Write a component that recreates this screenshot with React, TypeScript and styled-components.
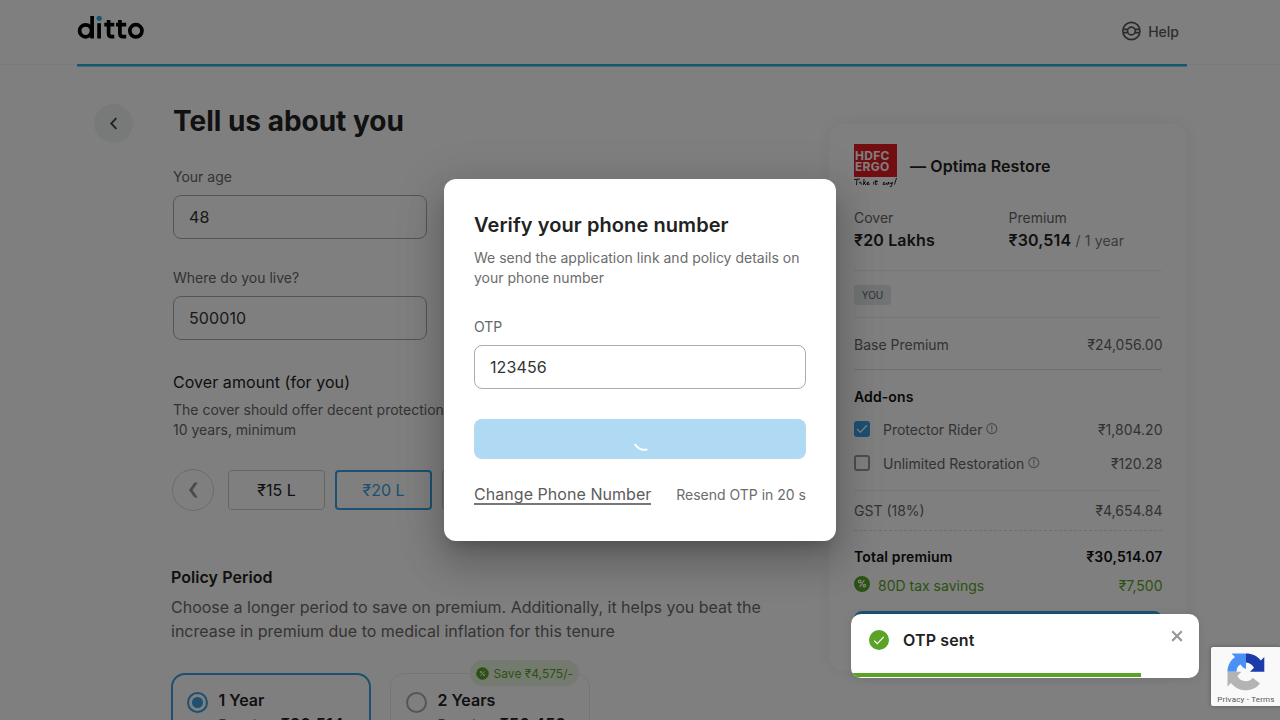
import React from "react";
import styled, { createGlobalStyle } from "styled-components";

const GlobalStyle = createGlobalStyle`
  * { box-sizing: border-box; }
  body { margin: 0; background: #fff; font-family: Inter, "Liberation Sans", sans-serif; color: #222; }
  input, button { font-family: inherit; }
  svg { display: block; flex: none; }
`;

const Page = styled.div`
  position: relative;
  width: 1280px;
  height: 720px;
  overflow: hidden;
`;

const Header = styled.header`
  height: 65px;
  padding: 0 93px 0 77px;
  border-bottom: 1px solid #f2f2f2;
`;
const HeaderInner = styled.div`
  width: 1110px;
  height: 66px;
  display: flex;
  align-items: flex-start;
  justify-content: space-between;
  border-bottom: 2px solid #22b0e0;
  box-shadow: 0 1px 0 #90d4ec;
`;
const LogoSvg = styled.svg`margin: 14px 0 0 0;`;
const HelpLink = styled.div`
  display: flex;
  align-items: center;
  gap: 7px;
  margin: 21px 8px 0 0;
  font-size: 14px;
  font-weight: 500;
  line-height: 22px;
  color: #5c5c5c;
`;
const HelpSvg = styled.svg`margin-top: -2px;`;

const Main = styled.main`
  display: flex;
  align-items: flex-start;
  padding-left: 94px;
`;
const BackButton = styled.button`
  width: 39px;
  height: 39px;
  margin: 39px 40px 0 0;
  padding: 0;
  border: 0;
  border-radius: 50%;
  background: #f0f4f4;
  display: flex;
  align-items: center;
  justify-content: center;
`;
const FormColumn = styled.section`
  width: 656px;
  padding-top: 38px;
`;
const PageTitle = styled.h1`
  margin: 0 0 28px;
  font-size: 28px;
  font-weight: 700;
  line-height: 36px;
  letter-spacing: -0.01px;
`;
const Field = styled.label<{ $gap: number }>`
  display: block;
  margin-bottom: ${(p) => p.$gap}px;
`;
const FieldLabel = styled.span`
  display: block;
  margin-bottom: 8px;
  font-size: 14px;
  line-height: 20px;
  color: #666;
`;
const TextInput = styled.input<{ $width: number }>`
  display: block;
  width: ${(p) => p.$width}px;
  height: 44px;
  padding: 0 15px;
  border: 1px solid #a8adad;
  border-radius: 8px;
  background: transparent;
  font-size: 16px;
  letter-spacing: 0.1px;
  color: #333;
  outline: none;
`;
const CoverHeading = styled.h2`
  margin: 0 0 6px;
  font-size: 16px;
  font-weight: 400;
  line-height: 24px;
  letter-spacing: 0.06px;
`;
const CoverHint = styled.p`
  margin: 0;
  width: 330px;
  font-size: 14px;
  line-height: 20px;
  color: #666;
`;
const CoverOptions = styled.div`
  display: flex;
  align-items: center;
  gap: 10px;
  margin: 29px 0 0 -1px;
`;
const PrevButton = styled.button`
  width: 42px;
  height: 42px;
  margin-right: 4px;
  padding: 0;
  border: 1px solid #d4d8d8;
  border-radius: 50%;
  background: transparent;
  display: flex;
  align-items: center;
  justify-content: center;
`;
const CoverOption = styled.button<{ $selected?: boolean }>`
  width: 97px;
  height: 40px;
  padding: 0;
  border: ${(p) => (p.$selected ? "2px solid #3aa0e3" : "1px solid #c9cdcd")};
  border-radius: 4px;
  background: transparent;
  font-size: 16px;
  color: ${(p) => (p.$selected ? "#3aa0e3" : "#222")};
`;
const PeriodSection = styled.div`
  margin: 54px 0 0 -2px;
`;
const PeriodHeading = styled.h2`
  margin: 0 0 6px;
  font-size: 16px;
  font-weight: 600;
  line-height: 24px;
  letter-spacing: 0.05px;
`;
const PeriodHint = styled.p`
  margin: 0;
  width: 610px;
  font-size: 16px;
  font-weight: 400;
  line-height: 24px;
  color: #6a6a6a;
`;
const PeriodCards = styled.div`
  display: flex;
  gap: 19px;
  margin-top: 30px;
`;
const PeriodCard = styled.div<{ $selected?: boolean }>`
  position: relative;
  display: flex;
  gap: 10.5px;
  width: 200px;
  height: 100px;
  padding: ${(p) => (p.$selected ? "14px 14px" : "15px")};
  border: ${(p) => (p.$selected ? "2px solid #3aa0e3" : "1px solid #e9ecec")};
  border-radius: 14px;
`;
const Radio = styled.span<{ $selected?: boolean }>`
  width: 21px;
  height: 21px;
  margin-top: 3px;
  border: 2px solid ${(p) => (p.$selected ? "#3aa0e3" : "#a8adad")};
  border-radius: 50%;
  display: flex;
  align-items: center;
  justify-content: center;
  &::after {
    content: "";
    width: 11px;
    height: 11px;
    border-radius: 50%;
    background: ${(p) => (p.$selected ? "#3aa0e3" : "transparent")};
  }
`;
const PeriodName = styled.div`
  font-size: 16px;
  font-weight: 600;
  line-height: 22px;
`;
const PeriodPrice = styled.div`
  margin-top: 1px;
  font-size: 14px;
  line-height: 24px;
  color: #666;
  white-space: nowrap;
  b { font-size: 16px; font-weight: 600; letter-spacing: 0.2px; color: #222; }
`;
const SaveBadge = styled.span`
  position: absolute;
  top: -14px;
  right: 10px;
  height: 26px;
  padding: 0 6px 0 6px;
  border-radius: 13px;
  background: #eaf5e1;
  display: flex;
  align-items: center;
  gap: 5px;
  font-size: 12px;
  color: #5aa327;
  white-space: nowrap;
`;

const Summary = styled.aside`
  width: 358px;
  height: 547px;
  margin-top: 59px;
  padding: 20px 25px 0;
  border-radius: 16px;
  background: #fff;
  box-shadow: 0 0 20px rgba(0, 0, 0, 0.07);
`;
const PlanRow = styled.div`
  display: flex;
  align-items: center;
  gap: 13px;
  height: 44px;
  font-size: 16px;
  font-weight: 600;
  letter-spacing: 0.1px;
`;
const InsurerLogo = styled.div`
  width: 43px;
  height: 44px;
`;
const InsurerMark = styled.div`
  height: 33px;
  padding: 7px 0 0 1px;
  background: #e41d25;
  color: #fff;
  font-size: 12px;
  font-weight: 700;
  line-height: 10.5px;
  letter-spacing: 0.25px;
`;
const Facts = styled.div`
  display: grid;
  grid-template-columns: 154.5px 1fr;
  margin-top: 20px;
  padding-bottom: 17px;
`;
const FactLabel = styled.div`
  font-size: 14px;
  font-weight: 400;
  line-height: 20px;
  color: #666;
`;
const FactValue = styled.div`
  font-size: 16px;
  font-weight: 600;
  line-height: 24px;
  letter-spacing: 0.15px;
  white-space: nowrap;
  span { font-size: 14px; font-weight: 400; color: #777; }
`;
const Rule = styled.div<{ $dashed?: boolean; $color?: string }>`
  border-top: 1px ${(p) => (p.$dashed ? "dashed" : "solid")} ${(p) => p.$color || "#eceeee"};
`;
const MemberChip = styled.div`
  width: 37px;
  height: 20px;
  margin: 14px 0 12px;
  border-radius: 3px;
  background: #e2e8e8;
  font-size: 10px;
  line-height: 20px;
  text-align: center;
  color: #666;
`;
const LineItem = styled.div<{ $height: number; $top?: number; $tone?: "bold" | "green" }>`
  display: flex;
  align-items: center;
  height: ${(p) => p.$height}px;
  margin-top: ${(p) => p.$top || 0}px;
  font-size: 14px;
  font-weight: ${(p) => (p.$tone === "bold" ? 600 : 400)};
  letter-spacing: ${(p) => (p.$tone === "bold" ? "0.15px" : "0")};
  color: ${(p) => (p.$tone === "bold" ? "#111" : p.$tone === "green" ? "#5aa327" : "#666")};
`;
const Amount = styled.span`margin: 0 -0.5px 0 auto;`;
const AddOnName = styled.span`margin: 0 3px 0 13px;`;
const SavingsName = styled.span`margin-left: 8px;`;
const SavingsIcon = styled.span`margin-top: -3px;`;
const AddOnHeading = styled.div`
  margin-top: 17px;
  font-size: 14px;
  font-weight: 600;
  line-height: 20px;
  letter-spacing: 0.1px;
  color: #111;
`;
const Checkbox = styled.span<{ $checked?: boolean }>`
  width: 16px;
  height: 16px;
  border: ${(p) => (p.$checked ? "0" : "2px solid #969d9d")};
  border-radius: 3px;
  background: ${(p) => (p.$checked ? "#3aa0e3" : "transparent")};
  display: flex;
  align-items: center;
  justify-content: center;
`;
const AddOnGroup = styled.div`padding: 5px 0 10px;`;
const PayButton = styled.div`
  height: 44px;
  margin-top: 16px;
  border-radius: 8px;
  background: #3aa0e3;
`;

const Backdrop = styled.div`
  position: absolute;
  inset: 0;
  display: flex;
  align-items: center;
  justify-content: center;
  background: rgba(0, 0, 0, 0.5);
`;
const Dialog = styled.div`
  width: 392px;
  height: 362px;
  padding: 32px 30px 0;
  border-radius: 12px;
  background: #fff;
  box-shadow: 0 11px 15px -7px rgba(0, 0, 0, 0.2), 0 24px 38px 3px rgba(0, 0, 0, 0.14),
    0 9px 46px 8px rgba(0, 0, 0, 0.12);
`;
const DialogTitle = styled.h2`
  margin: 0 0 9px;
  font-size: 20px;
  font-weight: 600;
  line-height: 28px;
  letter-spacing: 0.08px;
`;
const DialogText = styled.p`
  margin: 0 0 29px;
  font-size: 14px;
  line-height: 20px;
  color: #6c6c6c;
`;
const SubmitButton = styled.button`
  display: flex;
  align-items: center;
  justify-content: center;
  width: 332px;
  height: 40px;
  padding: 0;
  border: 0;
  border-radius: 8px;
  background: #b0d9f4;
`;
const DialogFooter = styled.div`
  display: flex;
  align-items: center;
  justify-content: space-between;
  margin-top: 25px;
  font-size: 14px;
  line-height: 20px;
  color: #6c6c6c;
`;
const ChangeLink = styled.a`
  padding-top: 2px;
  font-size: 16px;
  line-height: 17px;
  letter-spacing: 0.05px;
  border-bottom: 2px solid #777;
  color: #5c5c5c;
`;

const Toast = styled.div`
  position: absolute;
  left: 851px;
  top: 614px;
  width: 348px;
  height: 64px;
  padding: 16px 15px 0 18px;
  border-radius: 10px;
  overflow: hidden;
  background: #fff;
  box-shadow: 0 1px 10px rgba(0, 0, 0, 0.1);
  display: flex;
  align-items: flex-start;
`;
const ToastText = styled.div`
  margin-left: 14px;
  font-size: 16px;
  font-weight: 600;
  line-height: 20px;
  letter-spacing: 0.15px;
`;
const ToastProgress = styled.div`
  position: absolute;
  left: 0;
  bottom: 1px;
  width: 290px;
  height: 4px;
  background: #5aa327;
`;
const CloseIcon = styled.svg`margin-left: auto;`;

const Captcha = styled.div`
  position: absolute;
  left: 1211px;
  top: 647px;
  width: 70px;
  height: 59px;
  padding-top: 5px;
  border-radius: 2px;
  background: #f9f9f9;
  box-shadow: 0 0 4px rgba(0, 0, 0, 0.3);
  display: flex;
  flex-direction: column;
  align-items: center;
`;
const CaptchaText = styled.div`
  margin-top: 3px;
  font-family: Roboto, sans-serif;
  font-size: 8px;
  line-height: 10px;
  letter-spacing: 0.2px;
  color: #555;
`;

const DittoLogo = () => (
  <LogoSvg width="68" height="28" viewBox="0 0 68 28" fill="none" stroke="#000" strokeWidth="3.7">
    <circle cx="8.6" cy="16.8" r="6" />
    <path d="M15.1 2V24.5" />
    <path d="M22.1 9.2V24.5" />
    <circle cx="22.2" cy="4.3" r="2.6" fill="#22b0e0" stroke="none" />
    <path d="M31.6 6V19.6Q31.6 22.7 34.6 22.7H37.3M27.3 10.6H37.3" />
    <path d="M42.9 6V19.6Q42.9 22.7 46 22.7H49.2M39 10.6H49.2" />
    <circle cx="58.9" cy="16.8" r="6.1" />
  </LogoSvg>
);

const HelpIcon = () => (
  <HelpSvg width="20" height="20" viewBox="0 0 20 20" fill="none" stroke="#555" strokeWidth="1.6">
    <circle cx="10.4" cy="10" r="8.6" />
    <circle cx="10.4" cy="10" r="3.9" />
    <path d="M2 8.4H6.8M2 11.6H6.8M14 8.4H18.8M14 11.6H18.8" />
  </HelpSvg>
);

const PercentBadge = ({ size }: { size: number }) => (
  <svg width={size} height={size} viewBox="0 0 16 16">
    <circle cx="8" cy="8" r="7.3" fill="#5aa327" stroke="#5aa327" strokeWidth="1.2" strokeDasharray="2 1.2" />
    <g fill="none" stroke="#fff" strokeWidth="1.2">
      <path d="M10.3 5.3L5.7 10.7" />
      <circle cx="6.1" cy="6.2" r="0.9" />
      <circle cx="9.9" cy="9.8" r="0.9" />
    </g>
  </svg>
);

const SavingsBadge = () => (
  <svg width="16" height="16" viewBox="0 0 16 16">
    <circle cx="8" cy="8" r="8" fill="#5aa327" />
    <g fill="none" stroke="#fff" strokeWidth="1.3">
      <path d="M10.3 4L5.7 11" />
      <circle cx="5.7" cy="5.4" r="1.3" />
      <circle cx="10.3" cy="9.6" r="1.3" />
    </g>
  </svg>
);

const InfoIcon = () => (
  <svg width="13" height="12" viewBox="0 0 13 12" fill="none" stroke="#8f9696" strokeWidth="1.1">
    <circle cx="6.8" cy="5.6" r="5" />
    <path d="M6.8 2.6V6.4M6.8 7.6V8.8" strokeWidth="1.2" />
  </svg>
);

const addOns = [
  { name: "Protector Rider", price: "₹1,804.20", checked: true },
  { name: "Unlimited Restoration", price: "₹120.28", checked: false },
];

export default function App() {
  return (
    <Page>
      <GlobalStyle />
      <Header>
        <HeaderInner>
          <DittoLogo />
          <HelpLink>
            <HelpIcon />
            Help
          </HelpLink>
        </HeaderInner>
      </Header>

      <Main>
        <BackButton aria-label="Back">
          <svg width="9" height="13" viewBox="0 0 9 13" fill="none" stroke="#444" strokeWidth="1.9">
            <path d="M7.4 1.2L2.2 6.5L7.4 11.8" />
          </svg>
        </BackButton>
        <FormColumn>
          <PageTitle>Tell us about you</PageTitle>
          <Field $gap={29}>
            <FieldLabel>Your age</FieldLabel>
            <TextInput $width={254} readOnly value="48" />
          </Field>
          <Field $gap={30}>
            <FieldLabel>Where do you live?</FieldLabel>
            <TextInput $width={254} readOnly value="500010" />
          </Field>
          <CoverHeading>Cover amount (for you)</CoverHeading>
          <CoverHint>
            The cover should offer decent protection for
            <br />
            10 years, minimum
          </CoverHint>
          <CoverOptions>
            <PrevButton aria-label="Previous">
              <svg width="10" height="16" viewBox="0 0 10 16" fill="#8f9696">
                <path d="M6.5 0.5H9.8L4.5 8L9.8 15.5H6.5L1 8Z" />
              </svg>
            </PrevButton>
            <CoverOption>₹15 L</CoverOption>
            <CoverOption $selected>₹20 L</CoverOption>
            <CoverOption>₹25 L</CoverOption>
          </CoverOptions>
          <PeriodSection>
            <PeriodHeading>Policy Period</PeriodHeading>
            <PeriodHint>
              Choose a longer period to save on premium. Additionally, it helps you beat the increase in premium due
              to medical inflation for this tenure
            </PeriodHint>
            <PeriodCards>
              <PeriodCard $selected>
                <Radio $selected />
                <div>
                  <PeriodName>1 Year</PeriodName>
                  <PeriodPrice>
                    Premium <b>₹30,514</b>
                  </PeriodPrice>
                </div>
              </PeriodCard>
              <PeriodCard>
                <Radio />
                <div>
                  <PeriodName>2 Years</PeriodName>
                  <PeriodPrice>
                    Premium <b>₹56,453</b>
                  </PeriodPrice>
                </div>
                <SaveBadge>
                  <PercentBadge size={13} />
                  Save ₹4,575/-
                </SaveBadge>
              </PeriodCard>
            </PeriodCards>
          </PeriodSection>
        </FormColumn>

        <Summary>
          <PlanRow>
            <InsurerLogo>
              <InsurerMark>
                HDFC
                <br />
                ERGO
              </InsurerMark>
              <svg width="43" height="11" viewBox="0 0 43 11" fill="none" stroke="#111" strokeWidth="0.9">
                <path d="M0 2.5L6 2M3 2.5L2.5 8M5 6Q7 4 7 6T8 7M10 2L9.5 8M12 4.5L10 6L12 8M12.5 6.5Q15 6 14.5 5T13 7.5L16 7M20 4.5L19.5 7.5M22 3L21.5 7.5L23.5 7M20.8 4.5H24M29 6Q31 4.5 30 6T29 7.5L32 7M33 5.5Q31.5 7.5 33 7.5T34.5 5L35 7.5M36 5.5L37 7L38.5 5L37.5 9Q36.5 11 36 9M42.5 1L40.5 7.5" />
              </svg>
            </InsurerLogo>
            — Optima Restore
          </PlanRow>
          <Facts>
            <div>
              <FactLabel>Cover</FactLabel>
              <FactValue>₹20 Lakhs</FactValue>
            </div>
            <div>
              <FactLabel>Premium</FactLabel>
              <FactValue>
                ₹30,514 <span>/ 1 year</span>
              </FactValue>
            </div>
          </Facts>
          <Rule />
          <MemberChip>YOU</MemberChip>
          <Rule />
          <LineItem $height={49} $top={2}>
            Base Premium<Amount>₹24,056.00</Amount>
          </LineItem>
          <Rule $color="#dcdfdf" />
          <AddOnHeading>Add-ons</AddOnHeading>
          <AddOnGroup>
            {addOns.map((a) => (
              <LineItem key={a.name} $height={34}>
                <Checkbox $checked={a.checked}>
                  {a.checked && (
                    <svg width="12" height="10" viewBox="0 0 12 10" fill="none" stroke="#fff" strokeWidth="1.3">
                      <path d="M1 5L4.3 8.3L11 1.2" />
                    </svg>
                  )}
                </Checkbox>
                <AddOnName>{a.name}</AddOnName>
                <InfoIcon />
                <Amount>{a.price}</Amount>
              </LineItem>
            ))}
          </AddOnGroup>
          <Rule />
          <LineItem $height={39}>
            GST (18%)<Amount>₹4,654.84</Amount>
          </LineItem>
          <Rule $dashed $color="#dcdfdf" />
          <LineItem $height={39} $top={6} $tone="bold">
            Total premium<Amount>₹30,514.07</Amount>
          </LineItem>
          <LineItem $height={19} $tone="green">
            <SavingsIcon>
              <SavingsBadge />
            </SavingsIcon>
            <SavingsName>80D tax savings</SavingsName>
            <Amount>₹7,500</Amount>
          </LineItem>
          <PayButton />
        </Summary>
      </Main>

      <Backdrop>
        <Dialog role="dialog">
          <DialogTitle>Verify your phone number</DialogTitle>
          <DialogText>We send the application link and policy details on your phone number</DialogText>
          <Field $gap={30}>
            <FieldLabel>OTP</FieldLabel>
            <TextInput $width={332} readOnly value="123456" />
          </Field>
          <SubmitButton aria-label="Verifying">
            <svg width="24" height="24" viewBox="0 0 24 24" fill="none" stroke="#fff" strokeWidth="2">
              <path d="M6.8 17Q11.5 24.5 19.4 22.4" />
            </svg>
          </SubmitButton>
          <DialogFooter>
            <ChangeLink>Change Phone Number</ChangeLink>
            <span>Resend OTP in 20 s</span>
          </DialogFooter>
        </Dialog>
      </Backdrop>

      <Toast role="status">
        <svg width="20" height="20" viewBox="0 0 20 20" fill="none">
          <circle cx="10" cy="10" r="10" fill="#5aa327" />
          <path d="M5.2 10.6L8.3 13.6L14.8 6.8" stroke="#fff" strokeWidth="1.2" />
        </svg>
        <ToastText>OTP sent</ToastText>
        <CloseIcon width="14" height="12" viewBox="0 0 14 12" fill="none" stroke="#999" strokeWidth="2.2">
          <path d="M2.2 1.3L11.8 10.9M11.8 1.3L2.2 10.9" />
        </CloseIcon>
        <ToastProgress />
      </Toast>

      <Captcha>
        <svg width="40" height="40" viewBox="0 0 40 40">
          <path d="M20 1.5H5.5L9 5C4 8.5 1.5 14 1.5 19.7H10.5C10.7 16 12.2 13.8 14.5 12.6L17 15.5L20 17Z" fill="#4a90f5" />
          <path d="M20 1.5C26 1.5 31.5 4 34.8 8.5L38.3 5V19.7H24L28 15.8C26 12.5 23.5 11 20 10.6Z" fill="#1c3aa9" />
          <path d="M1.5 19.7H15.5L11.3 24C13 27.5 16.5 29.3 20 29.2C23 29.2 25 28 26.7 25.7L34 31.5C30.5 36 25.5 38.3 20 38.3C13.5 38.3 8.5 35.5 5 31L1.5 34.5Z" fill="#b4b4b4" />
        </svg>
        <CaptchaText>Privacy - Terms</CaptchaText>
      </Captcha>
    </Page>
  );
}
